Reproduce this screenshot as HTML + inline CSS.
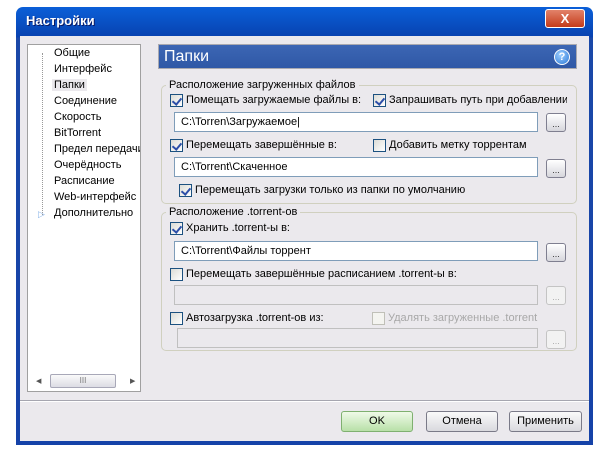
<!DOCTYPE html>
<html><head><meta charset="utf-8"><style>
*{margin:0;padding:0;box-sizing:border-box}
body{width:602px;height:456px;background:#fff;position:relative;overflow:hidden;font-family:"Liberation Sans","DejaVu Sans",sans-serif;font-size:11px;color:#000}
.a{position:absolute}
.win{left:16px;top:7px;width:577px;height:438px;background:#0831d9;border-radius:7px 7px 0 0;background:linear-gradient(#0a5fd8,#0842b0 30px,#1a48a8 31px,#1542a8)}
.client{left:20px;top:36px;width:569px;height:405px;background:#ebe9ed}
.title{left:26px;top:13px;color:#fff;font-weight:bold;font-size:13px;text-shadow:1px 1px #0a1860}
.close{left:545px;top:9px;width:40px;height:19px;border:1px solid #fff;border-radius:3px;background:linear-gradient(#e2836a,#c43b1a);color:#fff;font-weight:bold;text-align:center;font-size:13px;line-height:17px}
.tree{left:27px;top:44px;width:114px;height:348px;background:#fff;border:1px solid #a0a0a0}
.tree div{position:absolute;left:26px}
.dots{position:absolute;left:14px;border-left:1px dotted #999}
.hd{left:158px;top:44px;width:419px;height:25px;border:1px solid #a9a9b0;background:#3a63b0;background:linear-gradient(#3c66b4,#2f58a6);color:#fff;font-size:16px;line-height:23px;padding-left:5px}
.help{left:554px;top:49px;width:16px;height:16px;border-radius:50%;background:radial-gradient(circle at 40% 35%,#9fd0ff,#2a78d8);border:1px solid #fff;color:#fff;font-size:11px;font-weight:bold;text-align:center;line-height:14px}
.grp{border:1px solid #d0d0bf;border-radius:5px}
.lbl{background:#ebe9ed;padding:0 3px}
.cb{position:absolute;width:13px;height:13px;border:1px solid #1c5180;background:linear-gradient(135deg,#dcdcd6,#fff);}
.cb.on::after{content:"";position:absolute;left:3px;top:1px;width:4px;height:7px;border:solid #21a121;border-width:0 2px 2px 0;transform:rotate(40deg);border-color:#2c4ea8}
.cb.dis{border-color:#c0c0b8;background:#f4f4f0}
.ed{position:absolute;height:20px;border:1px solid #7f9db9;background:#fff;padding-left:6px;line-height:18px}
.ed.dis{background:#ebe9ed;border-color:#c0c0c0}
.bb{position:absolute;width:20px;height:19px;border:1px solid #7f7f90;border-radius:3px;background:linear-gradient(#fff,#d6d6dc);font-size:9px;text-align:center;line-height:20px;color:#333}
.bb.dis{border-color:#c4c4c4;background:#f2f2f2;color:#aaa}
.btn{position:absolute;top:411px;height:21px;border:1px solid #7a7a88;border-radius:3px;background:linear-gradient(#fafafa,#d9d9de);text-align:center;line-height:19px}
</style></head><body>
<div class="a win"></div>
<div class="a client"></div>
<div class="a title">Настройки</div>
<div class="a close">X</div>

<div class="a tree">
<span class="dots" style="top:8px;height:162px"></span>
<div style="top:2px">Общие</div>
<div style="top:18px">Интерфейс</div>
<div style="top:34px;background:#ebe9ed;padding:0 2px;left:24px">Папки</div>
<div style="top:50px">Соединение</div>
<div style="top:66px">Скорость</div>
<div style="top:82px">BitTorrent</div>
<div style="top:98px;white-space:nowrap;width:86px;overflow:hidden">Предел передачи</div>
<div style="top:114px">Очерёдность</div>
<div style="top:130px">Расписание</div>
<div style="top:146px">Web-интерфейс</div>
<div style="top:162px">Дополнительно</div>
<span style="position:absolute;left:10px;top:164px;color:#8ab4e8;font-size:9px">▷</span>
<span style="position:absolute;left:8px;top:332px;color:#555;font-size:7px">◀</span>
<span style="position:absolute;left:22px;top:329px;width:66px;height:14px;border:1px solid #a8a8b8;border-radius:2px;background:linear-gradient(#fafafa,#dcdce4);font-size:8px;text-align:center;line-height:12px;color:#777">III</span>
<span style="position:absolute;left:102px;top:332px;color:#555;font-size:7px">▶</span>
</div>

<div class="a hd">Папки</div>
<div class="a help">?</div>

<div class="a grp" style="left:161px;top:85px;width:416px;height:119px"></div>
<div class="a lbl" style="left:166px;top:79px">Расположение загруженных файлов</div>
<div class="cb on" style="left:170px;top:94px"></div><div class="a" style="left:186px;top:94px">Помещать загружаемые файлы в:</div>
<div class="cb on" style="left:373px;top:94px"></div><div class="a" style="left:389px;top:94px;white-space:nowrap;width:178px;overflow:hidden">Запрашивать путь при добавлении</div>
<div class="ed" style="left:174px;top:112px;width:364px">C:\Torren\Загружаемое|</div>
<div class="bb" style="left:546px;top:113px">...</div>
<div class="cb on" style="left:170px;top:139px"></div><div class="a" style="left:186px;top:139px">Перемещать завершённые в:</div>
<div class="cb" style="left:373px;top:139px"></div><div class="a" style="left:389px;top:139px">Добавить метку торрентам</div>
<div class="ed" style="left:174px;top:157px;width:364px">C:\Torrent\Скаченное</div>
<div class="bb" style="left:546px;top:159px">...</div>
<div class="cb on" style="left:179px;top:184px"></div><div class="a" style="left:195px;top:184px">Перемещать загрузки только из папки по умолчанию</div>

<div class="a grp" style="left:161px;top:212px;width:416px;height:139px"></div>
<div class="a lbl" style="left:166px;top:206px">Расположение .torrent-ов</div>
<div class="cb on" style="left:170px;top:222px"></div><div class="a" style="left:186px;top:222px">Хранить .torrent-ы в:</div>
<div class="ed" style="left:174px;top:241px;width:364px">C:\Torrent\Файлы торрент</div>
<div class="bb" style="left:546px;top:243px">...</div>
<div class="cb" style="left:170px;top:268px"></div><div class="a" style="left:186px;top:268px">Перемещать завершённые расписанием .torrent-ы в:</div>
<div class="ed dis" style="left:174px;top:285px;width:364px"></div>
<div class="bb dis" style="left:546px;top:286px">...</div>
<div class="cb" style="left:170px;top:312px"></div><div class="a" style="left:186px;top:312px">Автозагрузка .torrent-ов из:</div>
<div class="cb dis" style="left:372px;top:312px"></div><div class="a" style="left:388px;top:312px;color:#a8a8a8;white-space:nowrap;width:150px;overflow:hidden">Удалять загруженные .torrent</div>
<div class="ed dis" style="left:177px;top:328px;width:361px"></div>
<div class="bb dis" style="left:546px;top:330px">...</div>

<div class="a" style="left:20px;top:400px;width:569px;height:2px;border-top:1px solid #a6a6b0;border-bottom:1px solid #fff"></div>
<div class="btn" style="left:341px;width:72px;border-color:#7fb070;background:linear-gradient(#effae8,#b8e0a8)">OK</div>
<div class="btn" style="left:426px;width:72px">Отмена</div>
<div class="btn" style="left:509px;width:73px">Применить</div>
</body></html>
